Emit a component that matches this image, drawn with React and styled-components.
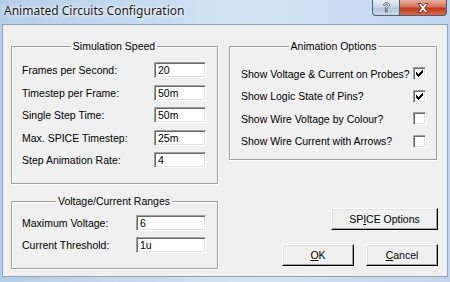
import React from "react";
import styled, { createGlobalStyle } from "styled-components";

const Global = createGlobalStyle`
  html, body {
    margin: 0;
    padding: 0;
    background: #c4d8ee;
  }
  body {
    font-family: "Liberation Sans", Arial, sans-serif;
  }
`;

const Window = styled.div`
  width: 450px;
  height: 282px;
  display: flex;
  flex-direction: column;
  overflow: hidden;
  background: linear-gradient(to right, #b7cee8, #d3e3f4 55%, #c0d5ed);
`;

const TitleBar = styled.div`
  height: 24px;
  flex-shrink: 0;
  display: flex;
  align-items: flex-start;
  justify-content: space-between;
  padding: 0 3px 0 4px;
`;

const Title = styled.span`
  font-family: "Noto Sans", "Open Sans", sans-serif;
  font-size: 12px;
  line-height: 21px;
  color: #1b1b1b;
  text-shadow: 0 0 6px #fff, 0 0 3px #fff;
`;

const Caption = styled.div`
  display: flex;
`;

const CapButton = styled.div`
  width: ${p => p.$w}px;
  height: 16px;
  box-sizing: border-box;
  display: flex;
  align-items: center;
  justify-content: center;
  border: 1px solid #4c5f78;
  border-top: none;
  border-left: ${p => (p.$close ? "none" : "1px solid #4c5f78")};
  border-radius: ${p => (p.$close ? "0 0 4px 0" : "0 0 0 4px")};
  background: ${p =>
    p.$close
      ? "linear-gradient(#e9b1a3, #d7735c 45%, #c2391d 55%, #d66d4c)"
      : "linear-gradient(#e6edf6, #cdd9e7 45%, #b5c6da 55%, #c9d7e6)"};
`;

const Client = styled.div`
  margin: 0 2px;
  height: 253px;
  box-sizing: border-box;
  border: 1px solid #8ea3bc;
  background: #f0f0f0;
  display: grid;
  grid-template-columns: 207px 209px;
  column-gap: 11px;
  align-items: start;
  padding: 15px 0 0 8px;
  font-size: 10.5px;
  color: #000;
`;

const Column = styled.div`
  display: flex;
  flex-direction: column;
  align-items: ${p => (p.$right ? "flex-end" : "stretch")};
`;

const Group = styled.fieldset`
  margin: ${p => p.$mt || 0}px ${p => p.$mr || 0}px 0 0;
  width: ${p => p.$w}px;
  box-sizing: border-box;
  min-width: 0;
  border: 1px solid #a0a0a0;
  box-shadow: 1px 1px 0 #fff, inset 1px 1px 0 #fff;
  padding: ${p => p.$pad};
`;

const Legend = styled.legend`
  margin: 0 auto;
  padding: 0 2px;
  line-height: 12px;
  font-size: 10.5px;
`;

const FieldGrid = styled.div`
  display: grid;
  grid-template-columns: 1fr ${p => p.$field}px;
  row-gap: ${p => p.$gap}px;
  align-items: center;
`;

const Label = styled.span`
  white-space: nowrap;
  line-height: 12px;
`;

const Field = styled.div`
  height: 16px;
  box-sizing: border-box;
  background: #fff;
  border: 1px solid;
  border-color: #a0a0a0 #fff #fff #a0a0a0;
  box-shadow: inset 1px 1px 0 #696969, inset -1px -1px 0 #e3e3e3;
  padding: 0 3px;
  line-height: 14px;
`;

const CheckGrid = styled.div`
  display: grid;
  grid-template-columns: 1fr 13px;
  row-gap: 9.67px;
  align-items: center;
`;

const Box = styled.div`
  width: 13px;
  height: 13px;
  box-sizing: border-box;
  background: #fff;
  border: 1px solid;
  border-color: #a0a0a0 #fff #fff #a0a0a0;
  box-shadow: inset 1px 1px 0 #696969, inset -1px -1px 0 #e3e3e3;
  display: flex;
  align-items: center;
  justify-content: center;
`;

const Button = styled.div`
  width: ${p => p.$w}px;
  height: 22px;
  box-sizing: border-box;
  background: #f0f0f0;
  border: 1px solid;
  border-color: #fff #000 #000 #fff;
  box-shadow: inset -1px -1px 0 #a0a0a0, inset 1px 1px 0 #e3e3e3;
  display: flex;
  align-items: center;
  justify-content: center;
  margin-top: ${p => p.$mt || 0}px;
`;

const ButtonRow = styled.div`
  display: flex;
  gap: 12px;
  margin-top: 14px;
`;

const Check = () => (
  <svg width="7" height="7" viewBox="0 0 7 7">
    <path d="M0 2h1v1h1v1h1V3h1V2h1V1h1V0h1v3h-1v1h-1v1h-1v1h-1v1h-1V6H1V5H0z" fill="#000" />
  </svg>
);

const sim = [
  ["Frames per Second:", "20"],
  ["Timestep per Frame:", "50m"],
  ["Single Step Time:", "50m"],
  ["Max. SPICE Timestep:", "25m"],
  ["Step Animation Rate:", "4"],
];

const ranges = [
  ["Maximum Voltage:", "6"],
  ["Current Threshold:", "1u"],
];

const options = [
  ["Show Voltage & Current on Probes?", true],
  ["Show Logic State of Pins?", true],
  ["Show Wire Voltage by Colour?", false],
  ["Show Wire Current with Arrows?", false],
];

export default function App() {
  return (
    <Window>
      <Global />
      <TitleBar>
        <Title>Animated Circuits Configuration</Title>
        <Caption>
          <CapButton $w={28}>
            <svg width="9" height="11" viewBox="0 0 9 11">
              <path
                d="M1.5 3.2C1.5 1.6 2.8 .8 4.5 .8s3 .9 3 2.3c0 1.3-.9 1.8-1.7 2.3-.6.4-.8.7-.8 1.4v.4H3.4v-.6c0-1 .4-1.5 1.2-2 .6-.4 1-.7 1-1.4 0-.6-.5-1-1.1-1s-1.2.4-1.2 1.1z M3.4 8h1.8v2H3.4z"
                fill="#fff"
                stroke="#3b4e66"
                strokeWidth=".8"
              />
            </svg>
          </CapButton>
          <CapButton $w={47} $close>
            <svg width="12" height="10" viewBox="0 0 12 10">
              <path
                d="M1 .5h3l2 2.4L8 .5h3L7.6 5 11 9.5H8L6 7.1 4 9.5H1L4.4 5z"
                fill="#fff"
                stroke="#6b1c10"
                strokeWidth=".8"
              />
            </svg>
          </CapButton>
        </Caption>
      </TitleBar>
      <Client>
        <Column>
          <Group $w={207} $pad="10px 11px 15px 10px">
            <Legend>Simulation Speed</Legend>
            <FieldGrid $field={52} $gap={6.5}>
              {sim.map(([l, v]) => (
                <React.Fragment key={l}>
                  <Label>{l}</Label>
                  <Field>{v}</Field>
                </React.Fragment>
              ))}
            </FieldGrid>
          </Group>
          <Group $w={207} $mt={11} $pad="8px 11px 15px 10px">
            <Legend>Voltage/Current Ranges</Legend>
            <FieldGrid $field={70} $gap={6}>
              {ranges.map(([l, v]) => (
                <React.Fragment key={l}>
                  <Label>{l}</Label>
                  <Field>{v}</Field>
                </React.Fragment>
              ))}
            </FieldGrid>
          </Group>
        </Column>
        <Column $right>
          <Group $w={208} $mr={1} $pad="15px 10px 11px 11px">
            <Legend>Animation Options</Legend>
            <CheckGrid>
              {options.map(([l, on]) => (
                <React.Fragment key={l}>
                  <Label>{l}</Label>
                  <Box>{on && <Check />}</Box>
                </React.Fragment>
              ))}
            </CheckGrid>
          </Group>
          <Button $w={107} $mt={48}>
            <span>
              SP<u>I</u>CE Options
            </span>
          </Button>
          <ButtonRow>
            <Button $w={72}>
              <span>
                <u>O</u>K
              </span>
            </Button>
            <Button $w={72}>
              <span>
                <u>C</u>ancel
              </span>
            </Button>
          </ButtonRow>
        </Column>
      </Client>
    </Window>
  );
}
